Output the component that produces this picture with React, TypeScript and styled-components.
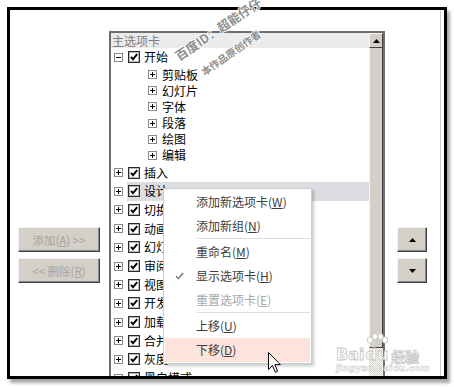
import styled, { createGlobalStyle } from "styled-components"

const GlobalStyle = createGlobalStyle`
	html, body {
		margin: 0;
		padding: 0;
		background: #fff;
	}
	body {
		font-family: "Noto Sans CJK SC", "Noto Sans", sans-serif;
	}
`

const SUB_GROUPS = ["剪贴板", "幻灯片", "字体", "段落", "绘图", "编辑"]
const TOP_TABS = ["插入", "设计", "切换", "动画", "幻灯片放映", "审阅", "视图", "开发工具", "加载项", "合并", "灰度", "黑白模式"]

const Expander = ({ open = false }: { open?: boolean }) => (
	<ExpanderIcon width="9" height="9" viewBox="0 0 9 9">
		<rect x="0.5" y="0.5" width="8" height="8" fill="#fff" stroke="#8a8a8a" />
		<path d="M2 4.5H7" stroke="#000" />
		{!open && <path d="M4.5 2V7" stroke="#000" />}
	</ExpanderIcon>
)

const CheckBox = () => (
	<CheckIcon width="12" height="12" viewBox="0 0 12 12">
		<rect x="0.5" y="0.5" width="11" height="11" fill="#fff" stroke="#2b2b2b" />
		<rect x="1.5" y="1.5" width="9" height="9" fill="none" stroke="#b8b8b8" />
		<path d="M3 5.8L5 8.2L9.2 3.2" fill="none" stroke="#000" strokeWidth="1.9" />
	</CheckIcon>
)

const Triangle = ({ down = false }: { down?: boolean }) => (
	<svg width="7" height="4" viewBox="0 0 7 4">
		<path d={down ? "M0 0H7L3.5 4Z" : "M0 4H7L3.5 0Z"} fill="#000" />
	</svg>
)

const Mn = ({ k }: { k: string }) => (
	<>
		(<u>{k}</u>)
	</>
)

const App = () => {
	return (
		<Page>
			<GlobalStyle />
			<Frame>
				<Inner>
					<SideColumn $width={82}>
						<SideButton disabled>
							添加(<u>A</u>) &gt;&gt;
						</SideButton>
						<SideButton disabled>
							&lt;&lt; 删除(<u>R</u>)
						</SideButton>
					</SideColumn>

					<ListBox>
						<ListContent>
							<Header>主选项卡</Header>
							<Row $height={18.7} $indent={3}>
								<Expander open />
								<Label>
									<CheckBox />
									<ItemText>开始</ItemText>
								</Label>
							</Row>
							{SUB_GROUPS.map((g) => (
								<Row key={g} $height={16.1} $indent={37}>
									<Expander />
									<Label>
										<ItemText>{g}</ItemText>
									</Label>
								</Row>
							))}
							{TOP_TABS.map((t) => (
								<Row key={t} $height={18.7} $indent={3}>
									<Expander />
									<Label $selected={t === "设计"}>
										<CheckBox />
										<ItemText>{t}</ItemText>
									</Label>
								</Row>
							))}
						</ListContent>
						<ScrollBar>
							<ScrollButton>
								<Triangle />
							</ScrollButton>
							<Thumb />
							<Track />
						</ScrollBar>
					</ListBox>

					<SideColumn $width={30} $gapLeft={12}>
						<SideButton>
							<Triangle />
						</SideButton>
						<SideButton>
							<Triangle down />
						</SideButton>
					</SideColumn>
				</Inner>
			</Frame>

			<Watermark $size={12.5} $left={180} $top={50} $angle={-34}>
				百度ID：超能仔仔
			</Watermark>
			<Watermark $size={10} $left={205} $top={67} $angle={-35}>
				本作品原创作者
			</Watermark>

			<Menu>
				<MenuItem>
					添加新选项卡<Mn k="W" />
				</MenuItem>
				<MenuItem>
					添加新组<Mn k="N" />
				</MenuItem>
				<Separator />
				<MenuItem>
					重命名<Mn k="M" />
				</MenuItem>
				<MenuItem>
					<MenuCheck width="9" height="8" viewBox="0 0 9 8">
						<path d="M1 4.2L3.4 6.6L8 1" fill="none" stroke="#6a6a6a" strokeWidth="1.3" />
					</MenuCheck>
					显示选项卡<Mn k="H" />
				</MenuItem>
				<MenuItem $disabled>
					重置选项卡<Mn k="E" />
				</MenuItem>
				<Separator />
				<MenuItem>
					上移<Mn k="U" />
				</MenuItem>
				<MenuItem $hot>
					下移<Mn k="D" />
				</MenuItem>
			</Menu>

			<BaiduMark>
				<BaiduTop>
					<span>Bai</span>
					<PawWrap>
						<svg width="22" height="14" viewBox="0 0 22 14">
							<g fill="#fff" stroke="#c9c9c9" strokeWidth="1">
								<ellipse cx="4" cy="7" rx="2.6" ry="3.2" />
								<ellipse cx="9" cy="3.5" rx="2.6" ry="3" />
								<ellipse cx="14.5" cy="3.5" rx="2.6" ry="3" />
								<ellipse cx="19" cy="7" rx="2.6" ry="3.2" />
							</g>
						</svg>
						<span>du</span>
					</PawWrap>
					<BaiduCn>经验</BaiduCn>
				</BaiduTop>
				<BaiduUrl>jingyan.baidu.com</BaiduUrl>
			</BaiduMark>

			<Cursor width="13" height="22" viewBox="0 0 13 22">
				<path d="M0.5 0.5V17.5L4.5 13.5L7.3 20.3L9.6 19.3L6.9 12.6H12.3Z" fill="#fff" stroke="#000" strokeLinejoin="miter" />
			</Cursor>
		</Page>
	)
}

export default App

const Page = styled.div`
	position: relative;
	box-sizing: border-box;
	width: 454px;
	height: 387px;
	padding: 7px;
	overflow: hidden;
	background: #fff;
`

const Frame = styled.div`
	box-sizing: border-box;
	width: 440px;
	height: 372px;
	border: 3px solid #000;
	background: #fff;
	box-shadow: 3px 4px 3px rgba(0, 0, 0, 0.35);
	overflow: hidden;
`

const Inner = styled.div`
	display: flex;
	align-items: flex-start;
	height: 100%;
	margin-right: 3px;
	padding-left: 8px;
	border-right: 1px solid #cfcfcf;
`

const SideColumn = styled.div<{ $width: number; $gapLeft?: number }>`
	display: flex;
	flex-direction: column;
	gap: 6px;
	flex: none;
	width: ${(p) => p.$width}px;
	margin-top: 217px;
	margin-left: ${(p) => p.$gapLeft ?? 0}px;
`

const SideButton = styled.button`
	display: flex;
	align-items: center;
	justify-content: center;
	box-sizing: border-box;
	height: 25px;
	padding: 0;
	border: 1px solid;
	border-color: #f4f4f4 #404040 #404040 #f4f4f4;
	box-shadow: inset -1px -1px 0 #8a8a8a;
	background: #d4d0c8;
	color: #000;
	font-family: "Noto Sans CJK SC", "Noto Sans", sans-serif;
	font-size: 11.5px;
	white-space: nowrap;

	&:disabled {
		color: #a3a3a3;
	}

	u {
		text-underline-offset: 1px;
	}
`

const ListBox = styled.div`
	display: flex;
	flex: none;
	box-sizing: border-box;
	width: 276px;
	height: 380px;
	margin-top: 21px;
	margin-left: 9px;
	border: 2px solid #6e6e6e;
	background: #fff;
`

const ListContent = styled.div`
	display: flex;
	flex-direction: column;
	flex: 1;
	min-width: 0;
	overflow: hidden;
`

const Header = styled.div`
	flex: none;
	height: 15px;
	padding-left: 1px;
	background: #ebebeb;
	color: #7d7d7d;
	font-size: 12px;
	line-height: 15px;
`

const Row = styled.div<{ $height: number; $indent: number }>`
	display: flex;
	align-items: center;
	flex: none;
	height: ${(p) => p.$height}px;
	padding-left: ${(p) => p.$indent}px;
`

const ExpanderIcon = styled.svg`
	flex: none;
	margin-right: 4px;
`

const Label = styled.div<{ $selected?: boolean }>`
	display: flex;
	align-items: center;
	align-self: stretch;
	flex: 1;
	padding-left: 1px;
	background: ${(p) => (p.$selected ? "#dcdce1" : "transparent")};
`

const CheckIcon = styled.svg`
	flex: none;
	margin-right: 4px;
`

const ItemText = styled.span`
	color: #000;
	font-size: 12px;
	line-height: 1;
	white-space: nowrap;
`

const ScrollBar = styled.div`
	display: flex;
	flex-direction: column;
	flex: none;
	width: 14px;
`

const ScrollButton = styled.div`
	display: flex;
	align-items: center;
	justify-content: center;
	flex: none;
	box-sizing: border-box;
	height: 15px;
	border: 1px solid;
	border-color: #f4f4f4 #404040 #404040 #f4f4f4;
	background: #d4d0c8;
`

const Thumb = styled.div`
	flex: none;
	box-sizing: border-box;
	height: 300px;
	border-left: 1px solid #f4f4f4;
	border-right: 1px solid #404040;
	border-bottom: 1px solid #404040;
	background: #d4d0c8;
`

const Track = styled.div`
	flex: 1;
	background: repeating-conic-gradient(#d4d0c8 0 25%, #ffffff 0 50%) 0 0 / 2px 2px;
`

const Watermark = styled.div<{ $size: number; $left: number; $top: number; $angle: number }>`
	position: absolute;
	left: ${(p) => p.$left}px;
	top: ${(p) => p.$top}px;
	transform: rotate(${(p) => p.$angle}deg);
	transform-origin: left bottom;
	color: #8e8e8e;
	font-size: ${(p) => p.$size}px;
	font-weight: 700;
	line-height: 1;
	white-space: nowrap;
	text-shadow: 1px 0 #fff, -1px 0 #fff, 0 1px #fff, 0 -1px #fff;
	pointer-events: none;
`

const Menu = styled.div`
	position: absolute;
	left: 163px;
	top: 188px;
	box-sizing: border-box;
	width: 149px;
	padding: 1px;
	border: 1px solid #cccccc;
	background: #fff;
	box-shadow: 2px 2px 3px rgba(0, 0, 0, 0.22);
`

const MenuItem = styled.div<{ $disabled?: boolean; $hot?: boolean }>`
	position: relative;
	height: 24px;
	padding-left: 31px;
	background: ${(p) => (p.$hot ? "#fce4dc" : "transparent")};
	color: ${(p) => (p.$disabled ? "#a8a8a8" : "#3c3c3c")};
	font-size: 12px;
	line-height: 24px;
	white-space: nowrap;

	u {
		text-underline-offset: 1px;
	}
`

const MenuCheck = styled.svg`
	position: absolute;
	left: 10px;
	top: 8px;
`

const Separator = styled.div`
	height: 1px;
	margin: 0 0 1px 32px;
	background: #dcdcdc;
`

const BaiduMark = styled.div`
	position: absolute;
	left: 336px;
	top: 333px;
	display: flex;
	flex-direction: column;
	color: #fff;
	pointer-events: none;
`

const BaiduTop = styled.div`
	display: flex;
	align-items: flex-end;
	font-family: "DejaVu Sans", sans-serif;
	font-size: 16px;
	font-weight: 700;
	line-height: 1;
	-webkit-text-stroke: 0.8px #c4c4c4;
`

const PawWrap = styled.div`
	display: flex;
	flex-direction: column;
	align-items: center;
	margin-left: 1px;
`

const BaiduCn = styled.span`
	margin-left: 3px;
	font-family: "Noto Sans CJK SC", sans-serif;
	font-size: 14px;
`

const BaiduUrl = styled.div`
	margin-top: 1px;
	color: #fff;
	font-family: "DejaVu Sans", sans-serif;
	font-size: 9px;
	font-weight: 700;
	line-height: 1;
	-webkit-text-stroke: 0.5px #c8c8c8;
`

const Cursor = styled.svg`
	position: absolute;
	left: 268px;
	top: 352px;
`
